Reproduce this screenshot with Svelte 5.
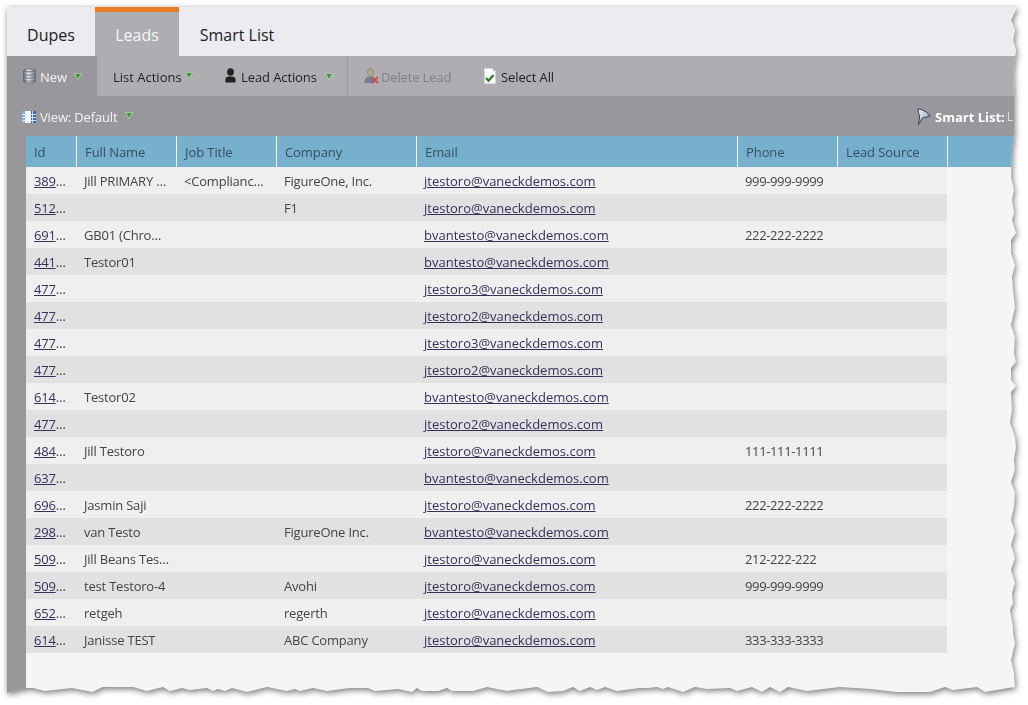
<script>
  const columns = ['Id', 'Full Name', 'Job Title', 'Company', 'Email', 'Phone', 'Lead Source', ''];
  const rows = [
    ['389…', 'Jill PRIMARY …', '<Complianc…', 'FigureOne, Inc.', 'jtestoro@vaneckdemos.com', '999-999-9999'],
    ['512…', '', '', 'F1', 'jtestoro@vaneckdemos.com', ''],
    ['691…', 'GB01 (Chro…', '', '', 'bvantesto@vaneckdemos.com', '222-222-2222'],
    ['441…', 'Testor01', '', '', 'bvantesto@vaneckdemos.com', ''],
    ['477…', '', '', '', 'jtestoro3@vaneckdemos.com', ''],
    ['477…', '', '', '', 'jtestoro2@vaneckdemos.com', ''],
    ['477…', '', '', '', 'jtestoro3@vaneckdemos.com', ''],
    ['477…', '', '', '', 'jtestoro2@vaneckdemos.com', ''],
    ['614…', 'Testor02', '', '', 'bvantesto@vaneckdemos.com', ''],
    ['477…', '', '', '', 'jtestoro2@vaneckdemos.com', ''],
    ['484…', 'Jill Testoro', '', '', 'jtestoro@vaneckdemos.com', '111-111-1111'],
    ['637…', '', '', '', 'bvantesto@vaneckdemos.com', ''],
    ['696…', 'Jasmin Saji', '', '', 'jtestoro@vaneckdemos.com', '222-222-2222'],
    ['298…', 'van Testo', '', 'FigureOne Inc.', 'bvantesto@vaneckdemos.com', ''],
    ['509…', 'Jill Beans Tes…', '', '', 'jtestoro@vaneckdemos.com', '212-222-222'],
    ['509…', 'test Testoro-4', '', 'Avohi', 'jtestoro@vaneckdemos.com', '999-999-9999'],
    ['652…', 'retgeh', '', 'regerth', 'jtestoro@vaneckdemos.com', ''],
    ['614…', 'Janisse TEST', '', 'ABC Company', 'jtestoro@vaneckdemos.com', '333-333-3333']
  ];
</script>

{#snippet caret()}
  <svg class="caret" width="8" height="7" viewBox="0 0 8 7" aria-hidden="true">
    <path d="M.4.4h7.200L4 6.600z" fill="#43963a" stroke="#c6e3bd" stroke-width=".7" />
  </svg>
{/snippet}

<div class="shadow">
  <div class="sheet">
    <div class="tabs">
      <div class="tab dupes">Dupes</div>
      <div class="tab active">Leads</div>
      <div class="tab smart">Smart List</div>
    </div>

    <div class="toolbar">
      <div class="tool new">
        <svg width="13" height="16" viewBox="0 0 13 16" aria-hidden="true">
          <defs>
            <linearGradient id="db" x1="0" x2="1" y1="0" y2="0">
              <stop offset="0" stop-color="#5f6a75" /><stop offset=".4" stop-color="#e3e7ea" /><stop offset="1" stop-color="#6d7782" />
            </linearGradient>
          </defs>
          <path d="M.5 2.500C.5.500 12.500.500 12.500 2.500v11C12.500 15.500.5 15.500.5 13.500z" fill="url(#db)" stroke="#59626b" stroke-width=".6" />
          <path d="M.5 2.500c1.500 1.700 10.500 1.700 12 0M.5 6c1.500 1.700 10.500 1.700 12 0M.5 9c1.500 1.700 10.500 1.700 12 0M.5 12c1.500 1.700 10.500 1.700 12 0" fill="none" stroke="#59626b" stroke-width=".8" />
        </svg>
        <span>New</span>{@render caret()}
      </div>
      <div class="tool list">List Actions{@render caret()}</div>
      <div class="tool lead">
        <svg width="11" height="15" viewBox="0 0 11 15" aria-hidden="true">
          <ellipse cx="5.500" cy="4" rx="3.400" ry="3.800" fill="#222" />
          <path d="M.5 14.500V11C.5 9 2.500 8.500 5.500 8.500s5 .5 5 2.500v3.500z" fill="#222" />
        </svg>
        <span class="lead-label">Lead Actions</span>{@render caret()}
      </div>
      <div class="tool delete">
        <svg width="15" height="16" viewBox="0 0 15 16" aria-hidden="true">
          <ellipse cx="6.500" cy="4.500" rx="3" ry="3.800" fill="#b5a595" stroke="#7e7468" stroke-width=".6" />
          <path d="M.5 15c0-4.500 2-6.500 5-6.500s5 2 5 6.500z" fill="#6f8299" />
          <path d="M7.500 9l6.500 6M14 9l-6.500 6" stroke="#c0504d" stroke-width="2" />
        </svg>
        <span>Delete Lead</span>
      </div>
      <div class="tool select">
        <svg width="12" height="16" viewBox="0 0 12 16" aria-hidden="true">
          <path d="M.5.5h8l3 3v12H.5z" fill="#fff" stroke="#d5d5d5" stroke-width=".5" />
          <path d="M8.500.5v3h3z" fill="#c9c9c9" />
          <path d="M2 10l2.500 2.800L9.500 7" fill="none" stroke="#2f7d2a" stroke-width="2.200" />
        </svg>
        <span>Select All</span>
      </div>
    </div>

    <div class="viewbar">
      <div class="view">
        <svg width="14" height="12" viewBox="0 0 14 12" aria-hidden="true">
          <rect width="14" height="12" fill="#f4f6fa" />
          <path d="M0 0h4v12H0z" fill="#8fb0dc" />
          <path d="M9 0h5v12H9z" fill="#3f68ad" />
          <path d="M0 3.500h14M0 6.500h14M0 9.500h14M3.500 0v12M7 0v12M10.500 0v12" stroke="#f4f6fa" stroke-width=".8" />
        </svg>
        <span>View: Default</span>{@render caret()}
      </div>
      <div class="smartlist">
        <svg width="15" height="17" viewBox="0 0 15 17" aria-hidden="true">
          <defs>
            <linearGradient id="fn" x1="0" x2="1" y1="0" y2="1">
              <stop offset="0" stop-color="#f1f3f8" /><stop offset="1" stop-color="#8c97ad" />
            </linearGradient>
          </defs>
          <path d="M2 1C6 1 13 5 14 8 11 9 8 9.500 6.500 10L2.500 16.500 3.500 9C3 6 2 3 2 1z" fill="url(#fn)" stroke="#2c3a55" stroke-width="1" />
        </svg>
        <strong>Smart List:</strong> <span class="smart-val">L</span>
      </div>
    </div>

    <div class="content">
      <div class="strip"></div>
      <div class="table">
        <div class="grid head">
          {#each columns as c}<div class="th">{c}</div>{/each}
        </div>
        {#each rows as r}
          <div class="grid row">
            <div class="td id"><span class="link">{r[0].slice(0, 3)}</span>…</div>
            <div class="td">{r[1]}</div>
            <div class="td">{r[2]}</div>
            <div class="td">{r[3]}</div>
            <div class="td"><span class="link">{r[4]}</span></div>
            <div class="td phone">{r[5]}</div>
            <div class="td"></div>
          </div>
        {/each}
      </div>
    </div>
  </div>
</div>

<style>
  :global(body) {
    margin: 0;
    background: #fff;
    overflow: hidden;
  }
  .shadow {
    width: 1028px;
    height: 705px;
    filter: drop-shadow(1px 2px 3px rgba(0, 0, 0, 0.55));
  }
  .sheet {
    box-sizing: border-box;
    width: 1028px;
    height: 705px;
    padding: 7px 0 0 7px;
    display: flex;
    flex-direction: column;
    background: #f5f5f5;
    font-family: "Open Sans", sans-serif;
    font-size: 13px;
    color: #444;
    clip-path: polygon(
      7px 7px, 1017px 7px, 1011px 20px, 1015px 30px, 1013px 40px, 1016px 50px, 1014px 63px, 1013px 73px, 1014px 97px, 1014px 133px,
      1012px 150px, 1011px 177px, 1014px 190px, 1012px 200px, 1014px 213px, 1012px 220px, 1016px 233px, 1011px 240px, 1011px 253px,
      1015px 265px, 1012px 277px, 1013px 290px, 1015px 307px, 1011px 325px, 1015px 337px, 1014px 353px, 1016px 362px, 1011px 368px,
      1011px 380px, 1016px 386px, 1011px 392px, 1012px 410px, 1010px 423px, 1015px 437px, 1016px 447px, 1014px 460px, 1015px 470px,
      1011px 482px, 1015px 493px, 1014px 507px, 1011px 520px, 1015px 532px, 1011px 545px, 1015px 558px, 1011px 570px, 1015px 583px,
      1012px 593px, 1013px 603px, 1010px 610px, 1013px 627px, 1013px 633px, 1015px 643px, 1011px 660px, 1014px 673px, 1015px 687px,
      1008px 688px, 985px 692px, 977px 687px, 953px 690px, 945px 687px, 930px 692px, 897px 692px, 870px 689px, 840px 687px, 807px 691px,
      788px 687px, 780px 692px, 770px 687px, 762px 692px, 752px 687px, 737px 691px, 730px 688px, 707px 689px, 695px 687px, 683px 692px,
      668px 687px, 663px 689px, 657px 687px, 648px 688px, 640px 688px, 617px 691px, 605px 687px, 597px 690px, 590px 687px, 580px 691px,
      573px 687px, 563px 691px, 548px 692px, 537px 687px, 507px 691px, 487px 687px, 473px 691px, 452px 691px, 447px 688px, 438px 691px,
      422px 691px, 417px 688px, 412px 692px, 398px 689px, 375px 691px, 368px 688px, 350px 688px, 327px 691px, 313px 688px, 300px 691px,
      295px 689px, 287px 691px, 267px 687px, 247px 692px, 232px 688px, 225px 691px, 218px 689px, 213px 691px, 207px 688px, 190px 690px,
      182px 688px, 170px 691px, 163px 687px, 147px 691px, 133px 687px, 103px 687px, 92px 692px, 72px 688px, 45px 691px, 33px 688px, 25px 688px,
      7px 693px
    );
  }
  .tabs {
    flex: 0 0 49px;
    display: flex;
    background: #ebebf0;
    font-size: 16px;
    color: #222;
  }
  .tab {
    box-sizing: border-box;
    padding-top: 17px;
    text-align: center;
  }
  .dupes { width: 88px; }
  .active {
    width: 84px;
    border-top: 5px solid #e87a22;
    padding-top: 12px;
    background: #aeadb2;
    color: #f5f5f5;
  }
  .smart { width: 116px; }
  .toolbar {
    flex: 0 0 40px;
    display: flex;
    background: #aeadb2;
    color: #222;
  }
  .tool {
    display: flex;
    align-items: center;
    box-sizing: border-box;
    height: 40px;
    padding-top: 2px;
  }
  .tool svg:first-child { margin-top: -3px; }
  .new {
    width: 90px;
    padding-left: 16px;
    background: #98979c;
    color: #f4f4f4;
  }
  .new span { margin-left: 4px; margin-right: 4px; }
  .caret { margin: -2px 0 0 3px; flex: none; }
  .list { width: 112px; padding-left: 16px; }
  .lead {
    width: 139px;
    padding-left: 16px;
    border-right: 1px solid #99989d;
  }
  .lead-label { margin: 0 5px 0 5px; letter-spacing: -0.1px; }
  .delete {
    width: 136px;
    padding-left: 16px;
    color: #808084;
  }
  .delete span { margin-left: 2px; letter-spacing: -0.15px; }
  .select span { margin-left: 5px; letter-spacing: -0.1px; }
  .viewbar {
    flex: 0 0 40px;
    display: flex;
    justify-content: space-between;
    box-sizing: border-box;
    width: 1021px;
    background: #98979c;
    color: #f4f4f4;
  }
  .view, .smartlist {
    display: flex;
    align-items: center;
    height: 40px;
    padding-top: 1px;
    box-sizing: border-box;
  }
  .view { padding-left: 15px; }
  .view span { margin: 0 5px 0 4px; letter-spacing: -0.15px; }
  .smartlist {
    width: 112px;
    gap: 4px;
    white-space: pre;
  }
  .smartlist strong { font-weight: 700; font-size: 13px; color: #fff; }
  .smart-val { margin-left: -2px; font-size: 12px; opacity: .8; }
  .content {
    flex: 1;
    display: flex;
    min-height: 0;
  }
  .strip {
    flex: 0 0 19px;
    background: #98979c;
  }
  .table { width: 1002px; }
  .grid {
    display: grid;
    grid-template-columns: 51px 100px 100px 140px 321px 100px 110px 80px;
  }
  .head {
    height: 31px;
    background: #77b0cd;
    color: #35505f;
  }
  .th {
    box-sizing: border-box;
    height: 31px;
    padding: 1px 0 0 8px;
    line-height: 31px;
    letter-spacing: -0.08px;
    border-right: 1px solid #f2f6f9;
  }
  .th:last-child { border-right: 0; }
  .row {
    width: 921px;
    height: 27px;
    grid-template-columns: 51px 100px 100px 140px 321px 100px 109px;
    background: #efefef;
  }
  .row:nth-child(odd) { background: #e1e1e1; }
  .td {
    box-sizing: border-box;
    height: 27px;
    padding: 1px 0 0 7px;
    line-height: 27px;
    white-space: nowrap;
    letter-spacing: -0.2px;
  }
  .id { padding-left: 8px; }
  .phone { letter-spacing: -0.36px; }
  .link {
    color: #33335a;
    text-decoration: underline;
    letter-spacing: 0;
  }
  .id .link { letter-spacing: -0.2px; }
</style>
